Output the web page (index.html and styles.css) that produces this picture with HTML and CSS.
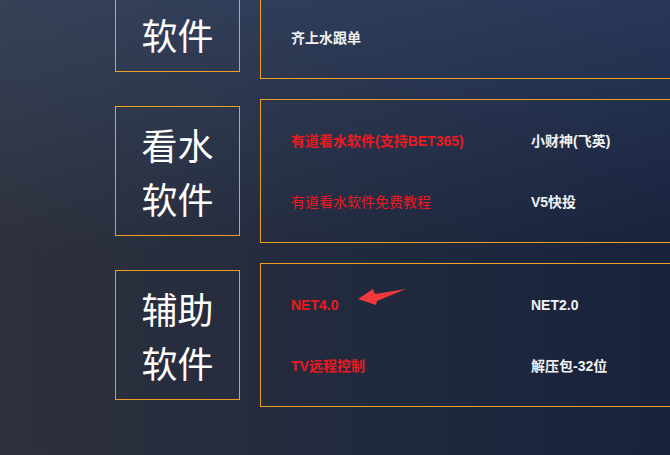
FILE: index.html
```html
<!DOCTYPE html>
<html lang="zh-CN">
<head>
    <meta charset="UTF-8">
    <meta name="viewport" content="width=device-width, initial-scale=1.0">
    <title>软件下载</title>
    <link rel="stylesheet" href="styles.css">
</head>
<body>
    <div class="soft-list">
        <!-- 跟单软件 (top part scrolled away) -->
        <div class="soft-row">
            <div class="soft-title scrolled">软件</div>
            <div class="soft-box">
                <span></span>
                <span></span>
                <a class="soft-link white" href="#">齐上水跟单</a>
                <span></span>
            </div>
        </div>

        <!-- 看水软件 -->
        <div class="soft-row">
            <div class="soft-title">看水<br>软件</div>
            <div class="soft-box">
                <a class="soft-link red" href="#">有道看水软件(支持BET365)</a>
                <a class="soft-link white" href="#">小财神(飞英)</a>
                <a class="soft-link red thin" href="#">有道看水软件免费教程</a>
                <a class="soft-link white" href="#">V5快投</a>
            </div>
        </div>

        <!-- 辅助软件 -->
        <div class="soft-row">
            <div class="soft-title">辅助<br>软件</div>
            <div class="soft-box">
                <a class="soft-link red has-arrow" href="#">NET4.0
                    <svg class="arrow" width="50" height="18" viewBox="0 0 50 18">
                        <polygon points="1,11 16,1 18,6 49,1 20,13 19,17" fill="#f03a3a"/>
                    </svg>
                </a>
                <a class="soft-link white" href="#">NET2.0</a>
                <a class="soft-link red" href="#">TV远程控制</a>
                <a class="soft-link white" href="#">解压包-32位</a>
            </div>
        </div>
    </div>
</body>
</html>
```

FILE: styles.css
```css
* {
    margin: 0;
    padding: 0;
    box-sizing: border-box;
}

html, body {
    height: 100%;
}

body {
    font-family: 'Liberation Sans', 'Noto Sans CJK SC', sans-serif;
    color: #fff;
    overflow: hidden;
    background:
        linear-gradient(to bottom, rgba(70, 95, 140, 0.35) 0%, rgba(70, 95, 140, 0) 55%),
        linear-gradient(to right, #2e313c 0%, #222a3e 50%, #18223c 100%);
}

/* list of software groups, page is scrolled a little */
.soft-list {
    margin-top: -65px;
    padding-left: 115px;
    display: flex;
    flex-direction: column;
    gap: 20px;
}

.soft-row {
    display: flex;
    align-items: center;
    gap: 20px;
}

/* big title box on the left */
.soft-title {
    flex: none;
    width: 125px;
    height: 130px;
    border: 1px solid #f0a020;
    display: flex;
    align-items: center;
    justify-content: center;
    text-align: center;
    font-family: 'Noto Sans CJK SC', sans-serif;
    font-size: 36px;
    line-height: 54px;
    font-weight: normal;
}

/* first line is above the fold, only keep the second one */
.soft-title.scrolled {
    padding-top: 54px;
}

/* links box on the right */
.soft-box {
    flex: none;
    width: 520px;
    height: 144px;
    border: 1px solid #f0a020;
    padding: 10px 0 10px 30px;
    display: grid;
    grid-template-columns: 240px 240px;
    grid-auto-rows: 61px;
    align-items: center;
}

.soft-link {
    font-size: 14px;
    font-weight: bold;
    text-decoration: none;
    line-height: 20px;
}

.soft-link.red {
    color: #ec1a1e;
}

.soft-link.white {
    color: #f2f2f2;
}

.soft-link.thin {
    font-weight: normal;
}

.has-arrow {
    position: relative;
}

.arrow {
    position: absolute;
    left: 66px;
    top: -7px;
}
```
